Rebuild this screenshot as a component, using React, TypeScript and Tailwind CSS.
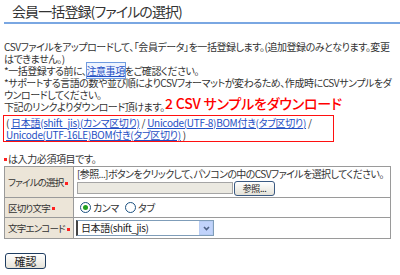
const Req = () => <span className="inline-block w-[3px] h-[3px] bg-[#ff2020] ml-[2px] align-middle" />;

function Radio({ checked, label }: { checked?: boolean; label: string }) {
  return (
    <label className="flex items-center gap-[2px]">
      <span className="w-[11px] h-[11px] rounded-full border border-[#1c5180] bg-white flex items-center justify-center">
        {checked && <span className="w-[5px] h-[5px] rounded-full bg-[#21a121]" />}
      </span>
      <span>{label}</span>
    </label>
  );
}

export default function App() {
  const link = "text-[#1f4fc4] underline";
  const label = "p-0 bg-[#ece5d8] border border-[#9a9a9a] pl-[3px] whitespace-nowrap text-[9.5px] tracking-[-0.8px]";
  return (
    <div className="relative w-[400px] h-[275px] bg-white overflow-hidden text-[#333] font-['Noto_Sans_CJK_JP',sans-serif] [font-feature-settings:'palt']">
      <h1 className="ml-[4px] h-[24px] pl-[8px] pt-[3px] border-b-2 border-[#7aa7e2] text-[14px] leading-[17px] tracking-[-0.9px]">
        会員一括登録(ファイルの選択)
      </h1>

      <div className="mt-[17px] px-[4px] text-[10px] leading-[12px] whitespace-nowrap tracking-[-0.45px]">
        <div>CSVファイルをアップロードして、「会員データ」を一括登録します。(追加登録のみとなります。変更</div>
        <div>はできません。)</div>
        <div>
          {" "}*一括登録する前に、
          <span className="text-[#1f4fc4] underline outline outline-1 outline-[#6f9be0] bg-[#eef4ff]">注意事項</span>
          をご確認ください。
        </div>
        <div> *サポートする言語の数や並び順によりCSVフォーマットが変わるため、作成時にCSVサンプルをダ</div>
        <div>ウンロードしてください。</div>
        <div>下記のリンクよりダウンロード頂けます。</div>
      </div>

      <div className="ml-[3px] mt-[2px] w-[331px] h-[27px] border border-[#ff1010] px-[2px] pt-[0.5px] text-[10px] leading-[12.5px] whitespace-nowrap tracking-[-0.3px]">
        <div>
          ( <span className={link}>日本語(shift_jis)(カンマ区切り)</span> /{" "}
          <span className={link}>Unicode(UTF-8)BOM付き(タブ区切り)</span> /
        </div>
        <div>
          <span className={link}>Unicode(UTF-16LE)BOM付き(タブ区切り)</span> )
        </div>
      </div>

      <div className="absolute left-[165px] top-[95px] text-[14px] leading-[17px] font-medium text-[#ff0000] whitespace-nowrap tracking-[-0.2px]">
        2 CSV サンプルをダウンロード
      </div>

      <div className="mt-[11px] ml-[4px] h-[12px] text-[10px] leading-[12px] tracking-[-0.4px] flex items-center">
        <span className="inline-block w-[3px] h-[3px] bg-[#ff2020] mr-[1px]" />
        は入力必須項目です。
      </div>

      <table className="table-fixed ml-[4px] mt-[1px] w-[387px] border-collapse border border-[#8e8e8e] text-[10px] leading-[12px] tracking-[-0.4px]">
        <colgroup>
          <col className="w-[69px]" />
          <col />
        </colgroup>
        <tbody>
          <tr>
            <td className={label}>
              ファイルの選択<Req />
            </td>
            <td className="p-0 border border-[#9a9a9a] pl-[3px] whitespace-nowrap">
              <div className="h-[30px] flex flex-col overflow-hidden">
                <div className="h-[13px] leading-[13px] tracking-[-0.6px]">[参照...]ボタンをクリックして、パソコンの中のCSVファイルを選択してください。</div>
                <div className="flex items-center h-[16px]">
                  <span className="w-[156px] h-[12px] bg-[#ebe9e1] border border-[#a5a5a5]" />
                  <span className="ml-[1px] w-[41px] h-[15px] rounded-[3px] border border-[#3b5a82] bg-gradient-to-b from-white to-[#e4e2d8] text-[9px] leading-[13px] text-center text-[#222]">
                    参照...
                  </span>
                </div>
              </div>
            </td>
          </tr>
          <tr>
            <td className={label}>
              区切り文字<Req />
            </td>
            <td className="p-0 border border-[#9a9a9a] pl-[6px]">
              <div className="h-[19px] flex items-center gap-[6px]">
                <Radio checked label="カンマ" />
                <Radio label="タブ" />
              </div>
            </td>
          </tr>
          <tr>
            <td className={label}>
              文字エンコード<Req />
            </td>
            <td className="p-0 border border-[#9a9a9a] pl-[2px]">
              <div className="h-[20px] flex items-center">
                <div className="w-[138px] h-[16px] flex items-stretch border border-[#7f9db9] border-l-[#444] border-l-2 bg-white">
                  <span className="flex-1 pl-[3px] leading-[14px] text-[#222]">日本語(shift_jis)</span>
                  <span className="w-[14px] bg-[#c1d3fb] border border-[#b9cdf3] flex items-center justify-center">
                    <svg width="7" height="5" viewBox="0 0 7 5">
                      <path d="M1 1 L3.5 3.5 L6 1" stroke="#4d6185" strokeWidth="1.6" fill="none" />
                    </svg>
                  </span>
                </div>
              </div>
            </td>
          </tr>
        </tbody>
      </table>

      <div className="ml-[5px] mt-[14px] w-[41px] h-[16px] rounded-[3px] border border-[#1f3d60] bg-gradient-to-b from-white to-[#e6e3d8] text-[11px] leading-[14px] text-center text-[#222]">
        確認
      </div>
    </div>
  );
}
